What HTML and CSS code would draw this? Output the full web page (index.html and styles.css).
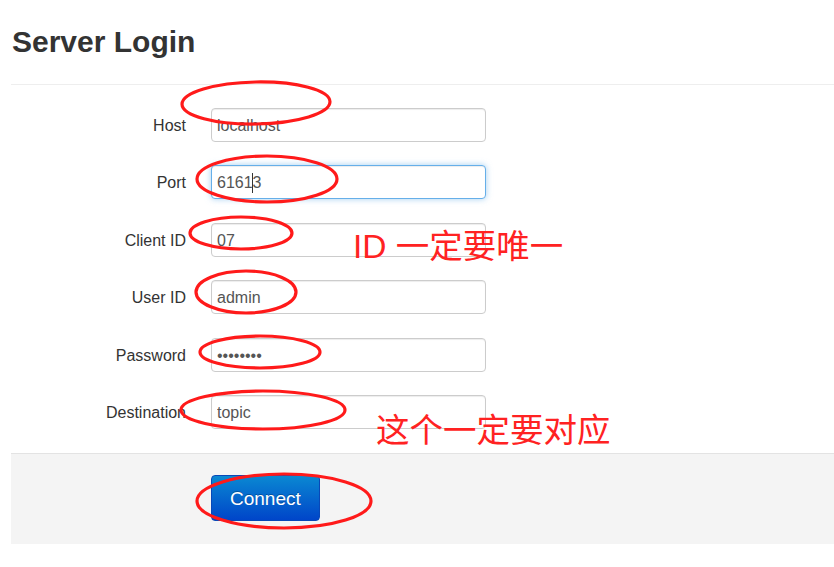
FILE: index.html
```html
<!DOCTYPE html>
<html lang="en">
<head>
<meta charset="utf-8">
<title>Server Login</title>
<link rel="stylesheet" href="styles.css">
</head>
<body>
<div class="page">
  <h2 class="title">Server Login</h2>
  <form class="form">
    <div class="rows">
      <div class="row"><label class="label">Host</label><input class="field" value="localhost"></div>
      <div class="row"><label class="label">Port</label>
        <div class="field-wrap"><input class="field focused" value="61613"><span class="caret"></span></div>
      </div>
      <div class="row"><label class="label">Client ID</label><input class="field" value="07"></div>
      <div class="row"><label class="label">User ID</label><input class="field" value="admin"></div>
      <div class="row"><label class="label">Password</label><input class="field" type="password" value="password"></div>
      <div class="row"><label class="label">Destination</label><input class="field" value="topic"></div>
    </div>
    <div class="actions"><button type="button" class="btn">Connect</button></div>
  </form>
</div>
<svg class="marks" width="834" height="567" viewBox="0 0 834 567">
  <ellipse cx="256" cy="103" rx="74" ry="21" transform="rotate(-1 256 103)"/>
  <ellipse cx="267" cy="179" rx="70" ry="23"/>
  <ellipse cx="241" cy="233" rx="51" ry="16"/>
  <ellipse cx="246" cy="292" rx="50" ry="21"/>
  <ellipse cx="260" cy="352" rx="60" ry="16"/>
  <ellipse cx="263" cy="410" rx="82" ry="19"/>
  <ellipse cx="284" cy="501" rx="87" ry="27"/>
</svg>
<div class="note note-id">ID 一定要唯一</div>
<div class="note note-dest">这个一定要对应</div>
</body>
</html>
```
FILE: styles.css
```css
html, body {
  margin: 0;
  padding: 0;
}
body {
  position: relative;
  width: 834px;
  height: 567px;
  overflow: hidden;
  background: #fff;
  color: #333;
  font-family: "Liberation Sans", Arial, sans-serif;
}
.page {
  padding-left: 11px;
}
.title {
  margin: 0;
  padding: 25px 0 26px 1px;
  font-size: 30px;
  line-height: 33px;
  font-weight: bold;
  color: #333;
  border-bottom: 1px solid #eee;
}
.form {
  margin: 0;
  padding-top: 23px;
}
.rows {
  display: flex;
  flex-direction: column;
  gap: 23.4px;
}
.row {
  display: grid;
  grid-template-columns: 175px 275px;
  column-gap: 25px;
  align-items: center;
  height: 34px;
}
.label {
  text-align: right;
  font-size: 16px;
  color: #333;
  padding-top: 2px;
}
.field-wrap {
  position: relative;
  height: 34px;
}
.field {
  box-sizing: border-box;
  width: 275px;
  height: 34px;
  margin: 0;
  padding: 2px 5px 0;
  border: 1px solid #ccc;
  border-radius: 4px;
  background: #fff;
  color: #555;
  font-family: "Liberation Sans", Arial, sans-serif;
  font-size: 16px;
  box-shadow: inset 0 1px 1px rgba(0, 0, 0, .075);
  outline: none;
}
.field.focused {
  border-color: #66afe9;
  box-shadow: inset 0 1px 1px rgba(0, 0, 0, .075), 0 0 6px rgba(102, 175, 233, .6);
}
.caret {
  position: absolute;
  left: 41px;
  top: 8px;
  width: 1px;
  height: 20px;
  background: #333;
}
.actions {
  margin-top: 24px;
  border-top: 1px solid #e3e3e3;
  background: #f4f4f4;
  padding: 21px 0 23px 200px;
}
.btn {
  box-sizing: border-box;
  height: 46px;
  padding: 2px 18px 0;
  border: 1px solid #0848b8;
  border-radius: 4px;
  background: linear-gradient(#0a88d2, #0045c9);
  color: #fff;
  font-family: "Liberation Sans", Arial, sans-serif;
  font-size: 19px;
  text-shadow: 0 -1px 0 rgba(0, 0, 0, .25);
  cursor: pointer;
}
.marks {
  position: absolute;
  left: 0;
  top: 0;
  pointer-events: none;
}
.marks ellipse {
  fill: none;
  stroke: #ff1a1a;
  stroke-width: 3.2;
}
.note {
  position: absolute;
  color: #ff2222;
  font-family: "Liberation Sans", "Noto Sans CJK SC", sans-serif;
  font-size: 33.5px;
  line-height: 1;
  white-space: nowrap;
}
.note-id {
  left: 353px;
  top: 230px;
}
.note-dest {
  left: 376px;
  top: 414px;
}
```
